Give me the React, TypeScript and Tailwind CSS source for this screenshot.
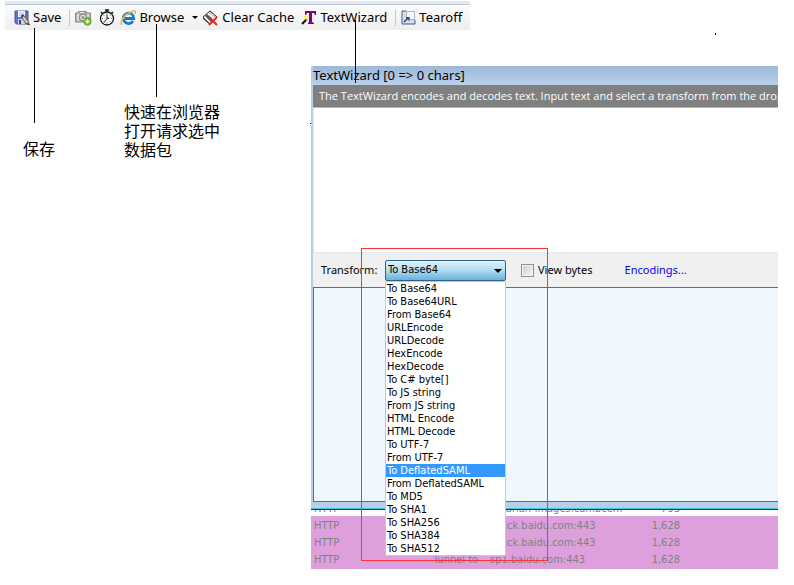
import type { ReactNode } from "react";

const transforms = [
  "To Base64", "To Base64URL", "From Base64", "URLEncode", "URLDecode", "HexEncode", "HexDecode",
  "To C# byte[]", "To JS string", "From JS string", "HTML Encode", "HTML Decode", "To UTF-7",
  "From UTF-7", "To DeflatedSAML", "From DeflatedSAML", "To MD5", "To SHA1", "To SHA256",
  "To SHA384", "To SHA512",
];

const sessions = [
  { protocol: "HTTP", kind: "", host: "librarian-images.cambcem", size: "793" },
  { protocol: "HTTP", kind: "", host: "eclick.baidu.com:443", size: "1,628" },
  { protocol: "HTTP", kind: "", host: "eclick.baidu.com:443", size: "1,628" },
  { protocol: "HTTP", kind: "Tunnel to", host: "sp1.baidu.com:443", size: "1,628" },
];

function SaveIcon() {
  return (
    <svg width="16" height="16" viewBox="0 0 16 16" aria-hidden="true">
      <path d="M1 1h13v13H2.500L1 12.500z" fill="#6272c4" stroke="#4552a4" />
      <path d="M4 1h7v6H4z" fill="#f4f6fc" />
      <path d="M5 3h5M5 5h5" stroke="#b4bde0" />
      <path d="M4 9h7v5H4z" fill="#c9cfe8" />
      <path d="M5 10h2v4H5z" fill="#39458c" />
      <path d="M7 6l2-1.500 5 6.500 1.500 4-4-2z" fill="#f0cd86" stroke="#45455a" strokeWidth="0.8" />
      <path d="M7 6l2-1.500 1.200 1.500-2 1.500z" fill="#333c78" />
      <path d="M14 13l1.500 2-2.500-1z" fill="#111" />
    </svg>
  );
}

function CameraIcon() {
  return (
    <svg width="17" height="16" viewBox="0 0 17 16" aria-hidden="true">
      <path d="M.5 3h3V1.500h8V3h4v9H.5z" fill="#b2b2aa" stroke="#8b8b82" />
      <path d="M2 4h2v7H2zM12 4h2v3h-2z" fill="#ddddd5" />
      <rect x="5" y="2" width="4" height="1" fill="#eee" />
      <circle cx="8" cy="7.500" r="3.500" fill="#e2e2dc" stroke="#77776f" />
      <circle cx="8" cy="7.500" r="1.500" fill="#92928a" />
      <circle cx="12.500" cy="11.500" r="3.800" fill="#76b82a" stroke="#559420" strokeWidth="0.6" />
      <path d="M12.500 9.500v4M10.500 11.500h4" stroke="#fff" strokeWidth="1.400" />
    </svg>
  );
}

function StopwatchIcon() {
  return (
    <svg width="16" height="17" viewBox="0 0 16 17" aria-hidden="true">
      <path d="M6 1h4M8 1v2M2 3l2 2M14 3l-2 2" stroke="#111" strokeWidth="1.500" />
      <circle cx="8" cy="9.500" r="6.500" fill="#fff" stroke="#111" strokeWidth="1.300" />
      <path d="M8 4.500v1M8 13.500v1M3 9.500h1M12 9.500h1M4.500 6l.7.7M11.500 13l-.7-.7M4.500 13l.7-.7M11.500 6l-.7.7" stroke="#22a3a3" strokeWidth="1.200" />
      <path d="M8 9.500V5.500M8 9.500h2" stroke="#111" />
      <path d="M9 8.500l-4 5" stroke="#d42020" strokeWidth="1.200" />
    </svg>
  );
}

function ExplorerIcon() {
  return (
    <svg width="16" height="16" viewBox="0 0 16 16" aria-hidden="true">
      <path d="M13 11a5.200 5.200 0 1 1 .7-2.500H5" fill="none" stroke="#1976c8" strokeWidth="2.800" />
      <path d="M4 6A5 5 0 0 1 12 5.500" fill="none" stroke="#5fbdf0" strokeWidth="1.200" />
      <path d="M2 15C-1 12 5 4 12 1.500c3-1 4 0 3 2.500" fill="none" stroke="#edb62c" strokeWidth="1.500" />
    </svg>
  );
}

function ClearCacheIcon() {
  return (
    <svg width="17" height="16" viewBox="0 0 17 16" aria-hidden="true">
      <path d="M1 7l7-6 7 6-7 7z" fill="#fff" stroke="#222" />
      <path d="M1 7v2l7 6v-1zM3 6l6 6 2-2-6-6z" fill="#555" />
      <path d="M7 3l5 4M6 5l4 3M8 2l5 5" stroke="#888" strokeDasharray="1 1" />
      <path d="M7 7l8 8M15 7l-8 8" stroke="#df2a1c" strokeWidth="2" />
    </svg>
  );
}

function WizardIcon() {
  return (
    <svg width="16" height="16" viewBox="0 0 16 16" aria-hidden="true">
      <path d="M4 1h11v4h-1l-1-2h-2v9l2 1v1H7v-1l1-1V3H6L5 5H4z" fill="#800080" />
      <path d="M1 14l5-5" stroke="#111" strokeWidth="2.200" />
      <path d="M5 10l1.500-1.500" stroke="#e8d900" strokeWidth="2" />
      <path d="M3 6l1 1M6 6v1" stroke="#e8d900" />
    </svg>
  );
}

function TearoffIcon() {
  return (
    <svg width="15" height="15" viewBox="0 0 15 15" aria-hidden="true">
      <path d="M1 1h4v8h9v5H1z" fill="#d3dff0" />
      <path d="M5 1H1v13h13v-4" fill="none" stroke="#4a5f86" />
      <path d="M5.500 1.500h8v8h-8z" fill="#f7faff" stroke="#5574a6" strokeDasharray="1 1" />
      <path d="M3 12l4.500-4.500M5 7.500h3v3" fill="none" stroke="#27395b" strokeWidth="1.200" />
    </svg>
  );
}

function ToolButton({ icon, label, children }: { icon: ReactNode; label: string; children?: ReactNode }) {
  return (
    <button type="button" className="relative flex items-center gap-[3px] whitespace-nowrap">
      {icon}
      <span>{label}</span>
      {children}
    </button>
  );
}

function Divider() {
  return <span className="mr-[5px] ml-2 h-4 w-px bg-[#c4c7cc]" />;
}

export default function App() {
  return (
    <div className="relative bg-white pt-px pb-4 font-['Noto_Sans','Noto_Sans_CJK_SC',sans-serif] text-black">
      <header className="ml-[5px] w-fit border-t-[3px] border-[#e2e8f4] text-[13px]">
        <div className="flex h-[26px] items-center border-t border-[#bcc9dd] bg-linear-to-b from-[#fcfcfc] to-[#efefef] pr-2 pl-[9px]">
          <ToolButton icon={<SaveIcon />} label="Save">
            <span className="absolute top-5 left-5 h-[95px] w-px bg-black" />
          </ToolButton>
          <Divider />
          <button type="button" aria-label="Screenshot"><CameraIcon /></button>
          <button type="button" aria-label="Timer" className="mr-[5px] ml-[7px]"><StopwatchIcon /></button>
          <ToolButton icon={<ExplorerIcon />} label="Browse">
            <span className="absolute top-4 left-9 h-[73px] w-px bg-black" />
          </ToolButton>
          <button type="button" aria-label="Choose browser" className="pr-1 pl-2">
            <span className="block border-x-3 border-t-3 border-x-transparent border-t-black" />
          </button>
          <ToolButton icon={<ClearCacheIcon />} label="Clear Cache" />
          <span className="w-[7px]" />
          <ToolButton icon={<WizardIcon />} label="TextWizard">
            <span className="absolute top-3 left-[54px] z-10 h-[63px] w-px bg-black" />
          </ToolButton>
          <Divider />
          <ToolButton icon={<TearoffIcon />} label="Tearoff" />
        </div>
      </header>
      <span className="absolute top-[33px] left-[715px] h-0.5 w-px bg-black" />

      <div className="flex items-start pr-4">
        <aside className="flex w-[311px] shrink-0 items-start pt-[73px] text-[16px] leading-[19px]">
          <p className="mt-[37px] ml-[23px] w-[101px]">保存</p>
          <p className="w-[100px]">快速在浏览器打开请求选中数据包</p>
        </aside>

        <main className="relative mt-9 min-w-0 flex-1 font-['DejaVu_Sans_Condensed','DejaVu_Sans',sans-serif] text-[11px]">
          <section className="border-b border-[#3cc8e8] bg-[#b9cfe8] pb-1.5 pl-0.5">
            <h1 className="h-[19px] bg-linear-to-b from-[#9db9d7] to-[#b9d0ea] font-['Noto_Sans',sans-serif] text-[13px] leading-[18px]">
              TextWizard [0 =&gt; 0 chars]
            </h1>
            <p className="h-[22px] overflow-hidden bg-[#808080] pl-1.5 font-['Open_Sans',sans-serif] leading-[22px] whitespace-nowrap text-white">
              The TextWizard encodes and decodes text. Input text and select a transform from the drop
            </p>
            <textarea aria-label="Input text" className="block h-[145px] w-full resize-none border-t border-l border-[#b8b3c0] border-l-[#e3e9ef] bg-white" />
            <div className="flex h-[35px] items-center border-t border-[#e3e9ef] bg-[#f0f0f0] pl-2 font-['Noto_Sans',sans-serif]">
              <label htmlFor="transform" className="w-16">Transform:</label>
              <div className="relative w-[121px]">
                <select
                  id="transform"
                  defaultValue="To Base64"
                  className="block h-[21px] w-full appearance-none rounded-xs border border-[#2c628b] bg-linear-to-b from-[#e3f3fb] via-[#b5def3] via-45% to-[#6ab2d8] pl-0.5 font-['DejaVu_Sans_Condensed','DejaVu_Sans',sans-serif]"
                >
                  {transforms.map((name) => <option key={name}>{name}</option>)}
                </select>
                <span className="pointer-events-none absolute top-[9px] right-1 border-x-4 border-t-4 border-x-transparent border-t-black" />
                <ul role="listbox" aria-label="Transforms" className="absolute top-[21px] left-0 z-10 w-full border border-[#c0c8d4] bg-white font-['DejaVu_Sans_Condensed','DejaVu_Sans',sans-serif] leading-[13px]">
                  {transforms.map((name) => (
                    <li
                      key={name}
                      role="option"
                      aria-selected={name === "To DeflatedSAML"}
                      className="pl-px whitespace-nowrap aria-selected:bg-[#3399ff] aria-selected:text-white"
                    >
                      {name}
                    </li>
                  ))}
                </ul>
              </div>
              <label className="ml-[15px] flex items-center gap-1">
                <input type="checkbox" className="size-[13px] appearance-none border border-[#8e8f8f] bg-linear-to-br from-[#cbcfd5] to-[#f6f6f6] shadow-[inset_0_0_0_1px_#f4f4f4]" />
                View bytes
              </label>
              <a href="#encodings" className="ml-8 text-[#0000ff]">Encodings...</a>
            </div>
            <div className="h-[215px] border border-r-0 border-[#646b75] bg-[#f0f8ff]" />
          </section>
          <div className="h-[60px] overflow-hidden border-t border-[#1c3540] text-[#808080]">
            <table className="-mt-[11px] w-full table-fixed border-collapse bg-[#dda0dd] leading-[13px]">
              <colgroup>
                <col className="w-[122px]" />
                <col className="w-[57px]" />
                <col className="w-[142px]" />
                <col className="w-12" />
                <col />
              </colgroup>
              <tbody>
                {sessions.map((row, index) => (
                  <tr key={index} className="h-[17px] first:bg-white">
                    <td className="p-0 pt-[3px] pb-px pl-[3px]">{row.protocol}</td>
                    <td className="p-0 pt-[3px] pb-px whitespace-nowrap">{row.kind}</td>
                    <td className="p-0 pt-[3px] pb-px whitespace-nowrap">{row.host}</td>
                    <td className="p-0 pt-[3px] pb-px text-right">{row.size}</td>
                    <td />
                  </tr>
                ))}
              </tbody>
            </table>
            <div className="h-[3px] bg-[#dda0dd]" />
          </div>
          <div className="pointer-events-none absolute top-[182px] left-[50px] z-20 h-[313px] w-[187px] border border-[#ff3333]" />
          <span className="absolute top-[57px] -left-px size-px bg-black" />
        </main>
      </div>
    </div>
  );
}
